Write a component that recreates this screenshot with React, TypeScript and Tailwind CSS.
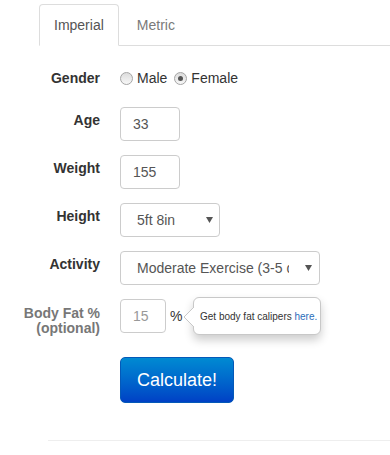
import React from "react";

function Radio({ checked }: { checked?: boolean }) {
  return (
    <span className="relative inline-flex h-[13px] w-[13px] items-center justify-center rounded-full border border-[#a5a5a5] bg-gradient-to-b from-[#dcdcdc] to-[#f7f7f7]">
      {checked && <span className="h-[5px] w-[5px] rounded-full bg-[#555]" />}
    </span>
  );
}

function Arrow() {
  return (
    <svg width="7" height="6" viewBox="0 0 7 6" className="shrink-0">
      <path d="M0 0 H7 L3.5 6 Z" fill="#555" />
    </svg>
  );
}

export default function App() {
  return (
    <div
      className="w-[390px] h-[455px] bg-white overflow-hidden text-[14px] text-[#333]"
      style={{ fontFamily: '"Liberation Sans", Arial, sans-serif' }}
    >
      {/* tabs */}
      <div className="ml-[39px] mt-1 flex border-b border-[#ddd]">
        <div className="-mb-px rounded-t-[4px] border border-[#ddd] border-b-white bg-white px-[14px] py-[10px] leading-5 text-[#555]">
          Imperial
        </div>
        <div className="-mb-px ml-[2px] border border-transparent px-[15px] py-[10px] leading-5 text-[#7a7a7a]">
          Metric
        </div>
      </div>

      {/* gender */}
      <div className="mt-[22px] flex h-5 items-center">
        <div className="w-[100px] text-right font-bold leading-5">Gender</div>
        <div className="ml-[20px] flex items-center">
          <Radio />
          <span className="ml-[4px] leading-5">Male</span>
          <span className="ml-[7px] flex items-center">
            <Radio checked />
          </span>
          <span className="ml-[4px] leading-5">Female</span>
        </div>
      </div>

      {/* age */}
      <div className="mt-[19px] flex h-[34px] items-start">
        <div className="w-[100px] pt-[3px] text-right font-bold leading-5">Age</div>
        <div className="ml-[20px] flex h-[34px] w-[60px] items-center rounded-[4px] border border-[#ccc] pl-[12px] text-[#555]">
          33
        </div>
      </div>

      {/* weight */}
      <div className="mt-[14px] flex h-[34px] items-start">
        <div className="w-[100px] pt-[3px] text-right font-bold leading-5">Weight</div>
        <div className="ml-[20px] flex h-[34px] w-[60px] items-center rounded-[4px] border border-[#ccc] pl-[12px] text-[#555]">
          155
        </div>
      </div>

      {/* height */}
      <div className="mt-[14px] flex h-[34px] items-start">
        <div className="w-[100px] pt-[3px] text-right font-bold leading-5">Height</div>
        <div className="ml-[20px] flex h-[34px] w-[100px] items-center justify-between rounded-[4px] border border-[#ccc] pl-[16px] pr-[6px] text-[#555]">
          <span>5ft 8in</span>
          <Arrow />
        </div>
      </div>

      {/* activity */}
      <div className="mt-[14px] flex h-[34px] items-start">
        <div className="w-[100px] pt-[3px] text-right font-bold leading-5">Activity</div>
        <div className="ml-[20px] flex h-[34px] w-[200px] items-center rounded-[4px] border border-[#ccc] pl-[16px] pr-[7px] text-[#555]">
          <span className="w-[152px] overflow-hidden whitespace-nowrap">
            Moderate Exercise (3-5 days/week)
          </span>
          <span className="ml-auto">
            <Arrow />
          </span>
        </div>
      </div>

      {/* body fat */}
      <div className="mt-[14px] flex h-[34px] items-start">
        <div className="w-[100px] pt-[7px] text-right font-bold leading-[15px] text-[#777]">
          Body Fat %<br />(optional)
        </div>
        <div className="relative ml-[20px] flex items-center">
          <div className="flex h-[34px] w-[46px] items-center rounded-[4px] border border-[#ccc] pl-[12px] text-[#999]">
            15
          </div>
          <span className="ml-[4px]">%</span>
          <div className="absolute left-[73px] top-[-2px] flex h-[38px] w-[128px] items-center rounded-[6px] border border-[#c8c8c8] bg-white pl-[6px] text-[10px] text-[#333] shadow-[0_5px_10px_rgba(0,0,0,0.2)]">
            <span>
              Get body fat calipers <span className="text-[#2a6ebb]">here.</span>
            </span>
            <svg
              width="11"
              height="20"
              viewBox="0 0 11 20"
              className="absolute left-[-11px] top-[9px]"
            >
              <path d="M11 0 L1 10 L11 20 Z" fill="white" />
              <path d="M11 0 L1 10 L11 20" fill="none" stroke="#c8c8c8" strokeWidth="1" />
            </svg>
          </div>
        </div>
      </div>

      {/* button */}
      <div className="mt-[24px] pl-[120px]">
        <div className="inline-flex h-[46px] w-[114px] items-center justify-center rounded-[5px] border border-[#0459b8] bg-gradient-to-b from-[#028ad2] to-[#0040c5] text-[18px] text-white">
          Calculate!
        </div>
      </div>

      {/* hr */}
      <div className="ml-[48px] mt-[37px] border-t border-[#eee]" />
    </div>
  );
}
